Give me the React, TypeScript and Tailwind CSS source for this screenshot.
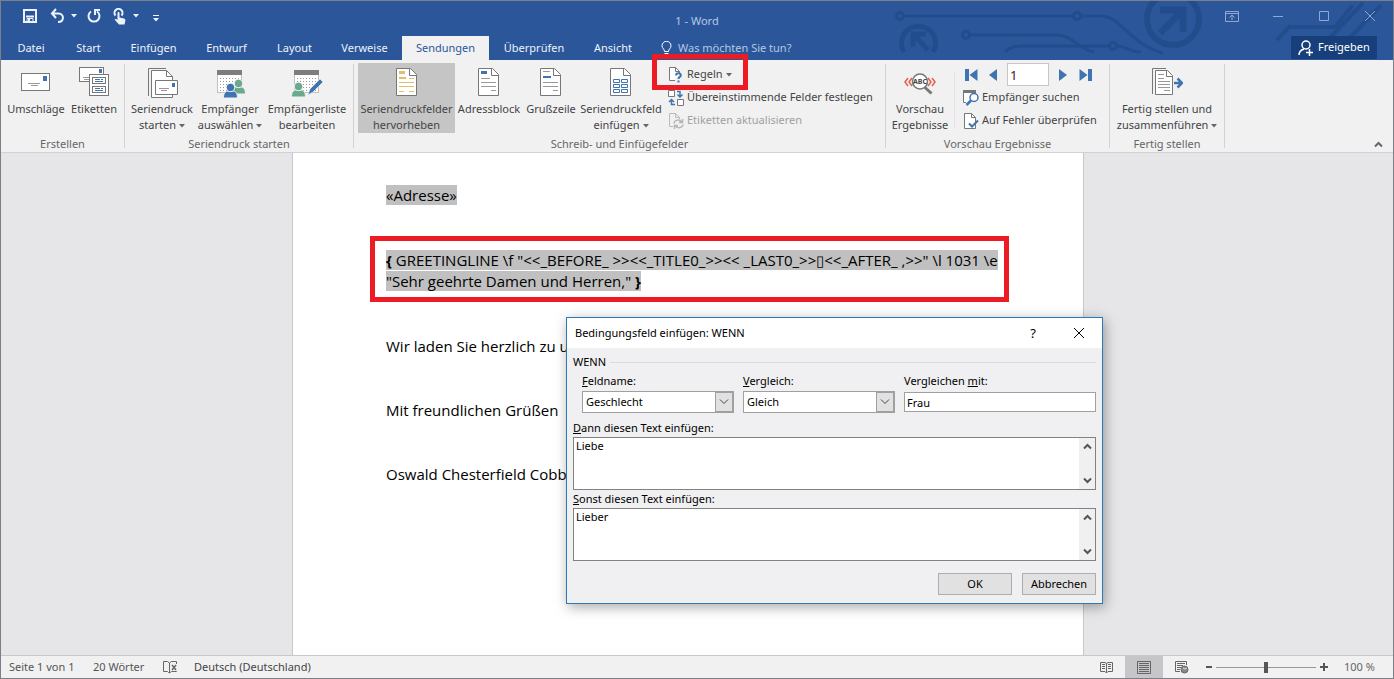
import type { ReactNode } from "react";
import clsx from "clsx";

const tabs = [
  { label: "Datei", width: "w-[60px]" },
  { label: "Start", width: "w-[55px]" },
  { label: "Einfügen", width: "w-[75px]" },
  { label: "Entwurf", width: "w-[71px]" },
  { label: "Layout", width: "w-[65px]" },
  { label: "Verweise", width: "w-[75px]" },
  { label: "Sendungen", width: "w-[87px]", active: true },
  { label: "Überprüfen", width: "w-[90px]" },
  { label: "Ansicht", width: "w-[68px]" },
];

/* ---------- Icons ---------- */

function Icon({ size = 32, children }: { size?: number; children: ReactNode }) {
  return (
    <svg width={size} height={size} viewBox={`0 0 ${size} ${size}`} fill="none" className="shrink-0">
      {children}
    </svg>
  );
}

function EnvelopeIcon() {
  return (
    <Icon>
      <rect x="1.5" y="6.5" width="28" height="17" fill="#fff" stroke="#777" />
      <rect x="23" y="9" width="4" height="5" fill="#3f74b1" />
      <path d="M8 16.5h12M11 18.5h7" stroke="#999" />
    </Icon>
  );
}

function LabelsIcon() {
  return (
    <Icon>
      <rect x="1.5" y=".5" width="24" height="14" fill="#fff" stroke="#777" />
      <rect x="21" y="2" width="3" height="4" fill="#3f74b1" />
      <path d="M5 10.5h6M6 12.5h5" stroke="#999" />
      <rect x="11.5" y="7.5" width="19" height="21" fill="#fff" stroke="#777" />
      <rect x="14.5" y="10.5" width="13" height="6" stroke="#777" />
      <rect x="14.5" y="19.5" width="13" height="6" stroke="#777" />
      <path d="M17 12.5h5M23 12.5h2M17 14.5h8M17 21.5h5M23 21.5h2M17 23.5h8" stroke="#3f74b1" />
    </Icon>
  );
}

function MergeStartIcon() {
  return (
    <Icon>
      <path d="M2.5 29V1.5H20" stroke="#777" />
      <path d="M5.5 30.5v-27h15l6 6v21z" fill="#fff" stroke="#777" />
      <path d="M20.5 3.5v6h6" stroke="#777" />
      <path d="M9.5 13.5h22v14h-22z" fill="#fff" stroke="#777" />
      <rect x="26" y="16" width="3" height="4" fill="#3f74b1" />
      <path d="M13 21.5h10M15 23.5h6" stroke="#999" />
    </Icon>
  );
}

function Calendar() {
  return (
    <>
      <rect x="3.5" y="4.5" width="24" height="21" fill="#fff" stroke="#888" strokeDasharray="1 1" />
      <rect x="3" y="3" width="25" height="5" fill="#7d7d7d" />
      <path
        d="M6 11.5h20M6 14.5h20M6 17.5h20M6 20.5h20M6 23.5h20"
        stroke="#999"
        strokeDasharray="1 2"
      />
    </>
  );
}

function Person({ x, y, fill }: { x: number; y: number; fill: string }) {
  return (
    <g transform={`translate(${x} ${y})`} fill={fill} stroke="#f1f1f2">
      <path d="M-.5 15c0-5 2-7 4.500-7h5c2.500 0 4.500 2 4.500 7z" />
      <circle cx="6.500" cy="4.500" r="4.200" />
    </g>
  );
}

function RecipientsIcon() {
  return (
    <Icon>
      <Calendar />
      <Person x={18} y={12} fill="#6aa98e" />
      <Person x={10} y={16} fill="#3f74b1" />
    </Icon>
  );
}

function EditListIcon() {
  return (
    <Icon>
      <Calendar />
      <Person x={1} y={15} fill="#6aa98e" />
      <path d="M17 28l2-6 10-10 3 3-10 10z" fill="#3f74b1" stroke="#f1f1f2" strokeWidth=".6" />
    </Icon>
  );
}

function Sheet({ children }: { children: ReactNode }) {
  return (
    <Icon>
      <path d="M5.5 1.5h14l6 6v21h-20z" fill="#fff" stroke="#777" />
      <path d="M18.500 1.500v7h7" stroke="#777" />
      {children}
    </Icon>
  );
}

function HighlightIcon() {
  return (
    <Sheet>
      <path d="M8 5.5h6" stroke="#e2bf6a" strokeWidth="3" />
      <path d="M8 11h7" stroke="#e2bf6a" strokeWidth="2" />
      <path d="M18 11.5h5M8 15.5h15M8 19.5h15M8 24.5h5M18 24.5h5" stroke="#e2bf6a" />
    </Sheet>
  );
}

function AddressIcon() {
  return (
    <Sheet>
      <path d="M8 5.5h6" stroke="#3f74b1" strokeWidth="3" />
      <path d="M8 11.5h9M8 15.5h15M8 19.5h15M18 23.5h5" stroke="#999" />
    </Sheet>
  );
}

function GreetingIcon() {
  return (
    <Sheet>
      <path d="M8 4.5h7M8 15.5h15M8 19.5h15M18 23.5h5" stroke="#999" />
      <path d="M8 10h8" stroke="#3f74b1" strokeWidth="2" />
    </Sheet>
  );
}

function MergeFieldIcon() {
  return (
    <Sheet>
      <path
        d="M8.5 12.5h6v3h-6zM16.5 12.5h6v3h-6zM8.5 17.5h6v3h-6zM16.5 17.5h6v3h-6zM8.5 22.5h6v3h-6zM16.5 22.5h6v3h-6z"
        stroke="#3f74b1"
      />
    </Sheet>
  );
}

function PreviewIcon() {
  return (
    <Icon>
      <path
        d="M4 11l-3 4 3 4M8 11l-3 4 3 4M24 11l3 4-3 4M28 11l3 4-3 4"
        stroke="#e0604c"
        strokeWidth="1.5"
      />
      <circle cx="16" cy="14.5" r="7.5" fill="#fff" stroke="#777" strokeWidth="1.5" />
      <path d="M20.5 20l7 6.500" stroke="#777" strokeWidth="3" />
      <text x="16" y="17" textAnchor="middle" fontSize="7" fontWeight="700" fill="#444">
        ABC
      </text>
    </Icon>
  );
}

function FinishIcon() {
  return (
    <Icon>
      <path d="M1.5 27V1.5H15" stroke="#777" />
      <path d="M4.5 3.5h12l5 5v19h-17z" fill="#fff" stroke="#777" />
      <path d="M15.5 3.5v6h6" stroke="#777" />
      <path d="M7 7.5h6M7 11.5h6M7 14.5h12M7 17.5h12M7 20.5h12M13 23.5h6" stroke="#999" />
      <path d="M23 16h8M26.5 11.5L31 16l-4.500 4.500" stroke="#3f74b1" strokeWidth="2.5" />
    </Icon>
  );
}

function RulesIcon() {
  return (
    <Icon size={16}>
      <path d="M7 13.5H1.5V.5h6l4 4V6" fill="#fff" stroke="#777" />
      <path d="M7.5.5v4h4" stroke="#777" />
      <path d="M8 8.500c.2-3.200 5-3 4.800 0 0 1.600-2.300 1.300-2.300 3.500" stroke="#3f74b1" strokeWidth="2" />
      <path d="M9.500 13.500h2v2h-2z" fill="#3f74b1" />
    </Icon>
  );
}

function MatchFieldsIcon() {
  return (
    <Icon size={16}>
      <path d="M.5.5h6v6h-6zM9.500 9.500h6v6h-6z" fill="#fff" stroke="#777" />
      <path
        d="M9 1.500h3V7M9.500 4.500L12 7l2.500-2.500M7 14.500H3.500V10M1 12l2.500-2.500L6 12"
        stroke="#3f74b1"
        strokeWidth="1.5"
      />
    </Icon>
  );
}

function UpdateLabelsIcon() {
  return (
    <Icon size={16}>
      <path d="M5 13.5H1.5V.5h6l4 4V6M7.5.5v4h4" stroke="#bbb" />
      <path
        d="M6 10.500c.5-4 6-4.500 7.500-1.500M14.500 6v3.500H11M15 11.500c-.5 3.500-6 4.500-7.500 1M6.500 16v-3.500H10"
        stroke="#b5b5b5"
        strokeWidth="1.5"
      />
    </Icon>
  );
}

function FindRecipientIcon() {
  return (
    <Icon size={16}>
      <path d="M3 12.500H.5V1.500h12V4" fill="#fff" stroke="#777" />
      <path d="M0 1.500h13" stroke="#777" strokeWidth="3" />
      <circle cx="11" cy="7.5" r="4" fill="#fff" stroke="#3f74b1" strokeWidth="1.5" />
      <path d="M8 10.500L3.500 15" stroke="#3f74b1" strokeWidth="2.5" />
    </Icon>
  );
}

function CheckErrorsIcon() {
  return (
    <Icon size={16}>
      <path d="M12.5 15.500h-11V.5h7l4 4z" fill="#fff" stroke="#777" />
      <path d="M8.500.5v4h4" stroke="#777" />
      <path d="M6 10.500l3 3 6-6" stroke="#3f74b1" strokeWidth="2" />
    </Icon>
  );
}

function Caret({ className = "text-[#666]" }: { className?: string }) {
  return (
    <svg width="6" height="4" viewBox="0 0 6 4" className={clsx("inline-block align-middle", className)}>
      <path d="M0 0h6L3 3.500z" fill="currentColor" />
    </svg>
  );
}

function Chevron({ up = false }: { up?: boolean }) {
  return (
    <svg width="9" height="7" viewBox="0 0 9 7" fill="none">
      <path d={up ? "M1 5.500L4.500 2 8 5.500" : "M1 1.500L4.500 5 8 1.500"} stroke="currentColor" strokeWidth="2" />
    </svg>
  );
}

/* ---------- Title bar ---------- */

function Circuit() {
  return (
    <svg
      width="500"
      height="60"
      viewBox="0 0 500 60"
      fill="none"
      stroke="#224d8d"
      className="pointer-events-none absolute top-0 right-0"
    >
      <g strokeWidth="3">
        <circle cx="7" cy="15" r="3.500" />
        <path d="M11 15h169M188 15h20c20 0 28 28 62 37" />
        <circle cx="184" cy="15" r="3.500" />
        <circle cx="73" cy="34" r="3.500" />
        <path d="M77 34h88c14 0 20 14 36 17M112 51c5-4 8-6 16-6h88M224 45c10 0 12 6 24 6" />
        <circle cx="220" cy="45" r="3.500" />
        <path d="M384 39l12-13h46l18-22M430 44l40-42M450 44l38-40" strokeWidth="4" />
      </g>
      <path d="M11 51a17 17 0 1 1 29 0" strokeWidth="5" />
      <path d="M20 46V33h13M21 34l14 15" strokeWidth="5" />
      <circle cx="280" cy="18" r="26" strokeWidth="6" />
      <path d="M267 9h23v22M289 10l-22 22" strokeWidth="7" />
    </svg>
  );
}

function QuickAccess() {
  return (
    <div className="flex items-center pl-[21px] text-[#eef3fb]">
      <button aria-label="Speichern">
        <svg width="16" height="16" viewBox="0 0 16 16" fill="none" stroke="currentColor">
          <path d="M2 2h12v12H2z" strokeWidth="2" />
          <path d="M4 8.500h8" strokeWidth="2" />
          <path d="M5 14v-3.500h6V14" />
          <path d="M6 11h2v3H6z" fill="currentColor" stroke="none" />
        </svg>
      </button>
      <button aria-label="Rückgängig" className="ml-3 flex items-center gap-1.5">
        <svg width="15" height="16" viewBox="0 0 15 16" fill="none" stroke="currentColor" strokeWidth="2">
          <path d="M6 1L2 5.500 6 10M2 5.500h6.500c6 0 6 8.500-.5 8.500" />
        </svg>
        <Caret className="text-[#eef3fb]" />
      </button>
      <button aria-label="Wiederholen" className="ml-2.5">
        <svg width="14" height="16" viewBox="0 0 14 16" fill="none" stroke="currentColor" strokeWidth="2">
          <path d="M4 3.500a5.500 5.500 0 1 0 6 0" />
          <path d="M8 7V2h5" />
        </svg>
      </button>
      <button aria-label="Touchmodus" className="ml-3 flex items-center gap-[7px]">
        <svg width="13" height="17" viewBox="0 0 13 17" fill="none" stroke="currentColor">
          <path d="M2.500 7.500a4 4 0 1 1 6 0" strokeWidth="2" />
          <path
            d="M4.500 5c0-1.500 2-1.500 2 0v4.500l4.500 1c1.500.4 1.500 1.500 1.200 3l-.7 3H6l-4.500-5c1-1 2-.5 3 .5z"
            fill="currentColor"
            stroke="none"
          />
        </svg>
        <Caret className="text-[#eef3fb]" />
      </button>
      <button aria-label="Symbolleiste anpassen" className="ml-3.5 pt-1">
        <svg width="6" height="7" viewBox="0 0 6 7" fill="currentColor">
          <path d="M0 0h6v1H0zM0 3h6L3 6.500z" />
        </svg>
      </button>
    </div>
  );
}

function WindowControls() {
  return (
    <div className="flex justify-end text-[#8fa9d2]">
      <button aria-label="Menüband-Anzeigeoptionen" className="grid w-[46px] place-items-center">
        <svg width="14" height="11" viewBox="0 0 14 11" fill="none" stroke="currentColor">
          <path d="M.5.5h13v10H.5zM.5 2.500h13M7 9V4M4.500 6.500L7 4l2.500 2.500" />
        </svg>
      </button>
      <button aria-label="Minimieren" className="grid w-[46px] place-items-center">
        <svg width="10" height="10" viewBox="0 0 10 10" stroke="currentColor">
          <path d="M0 5.500h10" />
        </svg>
      </button>
      <button aria-label="Maximieren" className="grid w-[46px] place-items-center">
        <svg width="10" height="10" viewBox="0 0 10 10" fill="none" stroke="currentColor">
          <path d="M.5.5h9v9h-9z" />
        </svg>
      </button>
      <button aria-label="Schließen" className="grid w-[46px] place-items-center">
        <svg width="12" height="12" viewBox="0 0 12 12" stroke="currentColor">
          <path d="M1 1l10 10M11 1L1 11" />
        </svg>
      </button>
    </div>
  );
}

function Header() {
  return (
    <header className="relative bg-[#2b579a] text-white">
      <Circuit />
      <div className="relative grid h-[30px] grid-cols-[1fr_auto_1fr]">
        <QuickAccess />
        <span className="self-end pb-0.5 text-[#b5c7e3]">1 - Word</span>
        <WindowControls />
      </div>
      <div className="relative flex pt-[5px]">
        <nav className="flex">
          {tabs.map((tab) => (
            <button
              key={tab.label}
              className={clsx(
                "h-6 whitespace-nowrap text-center",
                tab.width,
                tab.active ? "bg-[#f1f1f2] text-[#2b579a]" : "text-[#eef3fb]",
              )}
            >
              {tab.label}
            </button>
          ))}
        </nav>
        <button className="ml-3.5 flex items-center gap-1.5 text-[#b5c7e3]">
          <svg width="11" height="15" viewBox="0 0 11 15" fill="none" stroke="#fff">
            <path d="M3.500 10.500C3.500 8 1 7.500 1 4.800a4.500 4.500 0 0 1 9 0c0 2.700-2.500 3.200-2.500 5.700zM3.500 12.500h4M4 14.500h3" />
          </svg>
          Was möchten Sie tun?
        </button>
        <button className="mr-4 ml-auto flex h-[23px] w-[86px] items-center gap-1 bg-[#173f7c] pl-[7px]">
          <svg
            width="16"
            height="16"
            viewBox="0 0 16 16"
            fill="none"
            stroke="currentColor"
            strokeWidth="1.5"
            className="shrink-0"
          >
            <circle cx="8" cy="5" r="4" />
            <path d="M1 15c0-3.500 2-5 5-6M11.500 9v7M8 12.500h7" />
          </svg>
          Freigeben
        </button>
      </div>
    </header>
  );
}

/* ---------- Ribbon ---------- */

function RibbonGroup({ label, width, children }: { label: string; width: string; children: ReactNode }) {
  return (
    <section className={clsx("flex shrink-0 flex-col", width)}>
      <div className="flex h-[76px] pt-[3px]">{children}</div>
      <h2 className="text-center leading-4 text-[#666]">{label}</h2>
    </section>
  );
}

function Separator() {
  return <div className="my-1 w-px shrink-0 bg-[#d2d2d4]" />;
}

type BigButtonProps = {
  icon: ReactNode;
  lines: string[];
  width: string;
  menu?: boolean;
  pressed?: boolean;
};

function BigButton({ icon, lines, width, menu, pressed }: BigButtonProps) {
  return (
    <button
      className={clsx(
        "flex h-[70px] shrink-0 flex-col items-center pt-1 leading-4 whitespace-nowrap",
        width,
        pressed && "bg-[#c5c5c5]",
      )}
    >
      {icon}
      <span className="mt-0.5">{lines[0]}</span>
      {lines[1] && (
        <span>
          {lines[1]} {menu && <Caret />}
        </span>
      )}
    </button>
  );
}

function SmallButton({ icon, children, disabled }: { icon: ReactNode; children: ReactNode; disabled?: boolean }) {
  return (
    <button
      disabled={disabled}
      className={clsx("relative flex h-[23px] items-center gap-[3px] whitespace-nowrap", disabled && "text-[#a0a0a0]")}
    >
      {icon}
      {children}
    </button>
  );
}

function RecordNav() {
  return (
    <div className="flex h-[23px] items-center pl-0.5 text-[#3f74b1]">
      <button aria-label="Erster Datensatz">
        <svg width="13" height="12" viewBox="0 0 13 12" fill="currentColor">
          <path d="M0 0h4v12H0zM12.500 0v12L4.500 6z" />
        </svg>
      </button>
      <button aria-label="Vorheriger Datensatz" className="ml-[11px]">
        <svg width="8" height="12" viewBox="0 0 8 12" fill="currentColor">
          <path d="M8 0v12L0 6z" />
        </svg>
      </button>
      <input
        aria-label="Datensatz"
        defaultValue="1"
        className="mx-2.5 h-[23px] w-[42px] border border-[#c6c6c6] bg-white px-0.5 text-[13px] text-[#402020]"
      />
      <button aria-label="Nächster Datensatz">
        <svg width="8" height="12" viewBox="0 0 8 12" fill="currentColor">
          <path d="M0 0v12l8-6z" />
        </svg>
      </button>
      <button aria-label="Letzter Datensatz" className="ml-3">
        <svg width="13" height="12" viewBox="0 0 13 12" fill="currentColor">
          <path d="M.5 0v12l8-6zM9 0h4v12H9z" />
        </svg>
      </button>
    </div>
  );
}

function Ribbon() {
  return (
    <div className="flex h-[93px] border-b border-[#d2d2d4] bg-[#f1f1f2]">
      <RibbonGroup label="Erstellen" width="w-[123px]">
        <BigButton icon={<EnvelopeIcon />} lines={["Umschläge"]} width="w-[70px]" />
        <BigButton icon={<LabelsIcon />} lines={["Etiketten"]} width="w-[46px]" />
      </RibbonGroup>
      <Separator />
      <RibbonGroup label="Seriendruck starten" width="w-[228px]">
        <BigButton icon={<MergeStartIcon />} lines={["Seriendruck", "starten"]} width="w-[74px]" menu />
        <BigButton icon={<RecipientsIcon />} lines={["Empfänger", "auswählen"]} width="w-[62px]" menu />
        <BigButton icon={<EditListIcon />} lines={["Empfängerliste", "bearbeiten"]} width="w-[92px]" />
      </RibbonGroup>
      <Separator />
      <RibbonGroup label="Schreib- und Einfügefelder" width="w-[531px]">
        <div className="w-1 shrink-0" />
        <BigButton icon={<HighlightIcon />} lines={["Seriendruckfelder", "hervorheben"]} width="w-[97px]" pressed />
        <BigButton icon={<AddressIcon />} lines={["Adressblock"]} width="w-[68px]" />
        <BigButton icon={<GreetingIcon />} lines={["Grußzeile"]} width="w-[56px]" />
        <BigButton icon={<MergeFieldIcon />} lines={["Seriendruckfeld", "einfügen"]} width="w-[84px]" menu />
        <div className="ml-[5px]">
          <SmallButton icon={<RulesIcon />}>
            Regeln <Caret />
            <span className="pointer-events-none absolute -top-[9px] -left-4 h-9 w-24 border-5 border-[#ed1c24]" />
          </SmallButton>
          <SmallButton icon={<MatchFieldsIcon />}>Übereinstimmende Felder festlegen</SmallButton>
          <SmallButton icon={<UpdateLabelsIcon />} disabled>
            Etiketten aktualisieren
          </SmallButton>
        </div>
      </RibbonGroup>
      <Separator />
      <RibbonGroup label="Vorschau Ergebnisse" width="w-[223px]">
        <BigButton icon={<PreviewIcon />} lines={["Vorschau", "Ergebnisse"]} width="w-[68px]" />
        <div className="my-2 w-px bg-[#e2e2e4]" />
        <div className="ml-2">
          <RecordNav />
          <SmallButton icon={<FindRecipientIcon />}>Empfänger suchen</SmallButton>
          <SmallButton icon={<CheckErrorsIcon />}>Auf Fehler überprüfen</SmallButton>
        </div>
      </RibbonGroup>
      <Separator />
      <RibbonGroup label="Fertig stellen" width="w-[114px]">
        <BigButton icon={<FinishIcon />} lines={["Fertig stellen und", "zusammenführen"]} width="w-[114px]" menu />
      </RibbonGroup>
      <Separator />
      <button aria-label="Menüband reduzieren" className="mr-2.5 mb-1 ml-auto self-end text-[#666]">
        <Chevron up />
      </button>
    </div>
  );
}

/* ---------- Document ---------- */

function DocumentPage() {
  return (
    <article className="relative mx-auto w-[792px] border-x border-[#c8c8ca] bg-white px-[93px] pt-8 font-['Open_Sans','Noto_Sans',sans-serif] text-[15px] leading-[21px] text-black">
      <div className="flex flex-col gap-[43px]">
        <p>
          <span className="bg-[#c0c0c0]">«Adresse»</span>
        </p>
        <div className="relative my-px whitespace-nowrap">
          <p>
            <span className="bg-[#bfc0bf]">
              <b>{"{"}</b>
              {' GREETINGLINE \\f "<<_BEFORE_ >><<_TITLE0_>><< _LAST0_>>▯<<_AFTER_ ,>>" \\l 1031 \\e'}
            </span>
          </p>
          <p>
            <span className="bg-[#bfc0bf]">
              {'"Sehr geehrte Damen und Herren," '}
              <b>{"}"}</b>
            </span>
          </p>
          <span className="pointer-events-none absolute -top-[14px] -right-[19px] -bottom-[10px] -left-4 border-5 border-[#ed1c24]" />
        </div>
        <p>Wir laden Sie herzlich zu u</p>
        <p>Mit freundlichen Grüßen</p>
        <p>Oswald Chesterfield Cobblepot</p>
      </div>
      <FieldDialog />
    </article>
  );
}

function SelectField({ id, label, value }: { id: string; label: ReactNode; value: string }) {
  return (
    <div className="w-[152px]">
      <label htmlFor={id} className="block h-[18px]">
        {label}
      </label>
      <div className="relative flex h-[22px] border border-[#a0a0a0] bg-white">
        <select id={id} defaultValue={value} className="w-full appearance-none pl-[3px]">
          <option>{value}</option>
        </select>
        <span className="pointer-events-none absolute inset-y-0 right-0 grid w-[18px] place-items-center border border-[#a0a0a0] bg-[#e1e1e1] text-[#444]">
          <svg width="10" height="6" viewBox="0 0 10 6" fill="none" stroke="currentColor">
            <path d="M1 .5l4 4 4-4" />
          </svg>
        </span>
      </div>
    </div>
  );
}

function TextField({ id, label, value }: { id: string; label: ReactNode; value: string }) {
  return (
    <div>
      <label htmlFor={id} className="block h-[18px] leading-[18px]">
        {label}
      </label>
      <div className="flex h-[53px] border border-[#828282] bg-white">
        <textarea id={id} defaultValue={value} className="flex-1 resize-none overflow-hidden pl-0.5" />
        <div className="flex w-4 flex-col items-center justify-between bg-[#f0f0f0] py-[5px] text-[#555]">
          <Chevron up />
          <Chevron />
        </div>
      </div>
    </div>
  );
}

function FieldDialog() {
  return (
    <div
      role="dialog"
      aria-label="Bedingungsfeld einfügen: WENN"
      className="absolute top-[164px] left-[273px] w-[537px] border border-[#2a7ab8] bg-[#f0eff1] pb-2 font-['Noto_Sans',sans-serif] text-[11px] leading-4 text-black shadow-[2px_3px_12px_rgba(0,0,0,0.35)]"
    >
      <div className="flex h-[30px] items-center bg-white pl-2">
        Bedingungsfeld einfügen: WENN
        <button aria-label="Hilfe" className="ml-auto w-[46px] text-[13px]">
          ?
        </button>
        <button aria-label="Schließen" className="grid w-[46px] place-items-center">
          <svg width="12" height="12" viewBox="0 0 12 12" stroke="currentColor">
            <path d="M1 1l10 10M11 1L1 11" />
          </svg>
        </button>
      </div>
      <form className="px-[6px] pt-[6px]">
        <div className="flex items-center gap-1">
          WENN
          <span className="h-px flex-1 bg-[#dadadc]" />
        </div>
        <div className="mt-[3px] mb-[6px] flex gap-[9px] pl-[9px]">
          <SelectField
            id="feldname"
            label={
              <>
                <u>F</u>eldname:
              </>
            }
            value="Geschlecht"
          />
          <SelectField
            id="vergleich"
            label={
              <>
                <u>V</u>ergleich:
              </>
            }
            value="Gleich"
          />
          <div className="flex-1">
            <label htmlFor="wert" className="block h-[18px]">
              Vergleichen <u>m</u>it:
            </label>
            <input id="wert" defaultValue="Frau" className="mt-px h-5 w-full border border-[#a0a0a0] bg-white pl-0.5" />
          </div>
        </div>
        <TextField
          id="dann"
          label={
            <>
              <u>D</u>ann diesen Text einfügen:
            </>
          }
          value="Liebe"
        />
        <TextField
          id="sonst"
          label={
            <>
              <u>S</u>onst diesen Text einfügen:
            </>
          }
          value="Lieber"
        />
        <div className="mt-3 flex justify-end gap-2.5">
          <button type="button" className="h-[22px] w-[74px] border border-[#adadad] bg-[#e1e1e1]">
            OK
          </button>
          <button type="button" className="h-[22px] w-[74px] border border-[#adadad] bg-[#e1e1e1]">
            Abbrechen
          </button>
        </div>
      </form>
    </div>
  );
}

/* ---------- Status bar ---------- */

function StatusBar() {
  return (
    <footer className="flex h-[23px] items-center border-t border-[#c9c9cb] bg-[#f1f1f2] pl-2 whitespace-nowrap text-[#555]">
      <span className="w-[84px]">Seite 1 von 1</span>
      <span className="w-[70px]">20 Wörter</span>
      <svg width="15" height="13" viewBox="0 0 15 13" fill="none" stroke="#666">
        <path d="M7 11.500H5.500l-1-1H.5V.5h4L6.500 2v10M6.500 2l2-1.500h5V3M6.500 12l2-1.500h5V10" />
        <path d="M9 4l4 5M13 4L9 9" strokeWidth="1.5" />
      </svg>
      <span className="ml-4 text-[#444]">Deutsch (Deutschland)</span>
      <div className="ml-auto flex h-full items-center text-[#666]">
        <button aria-label="Lesemodus" className="grid h-full w-[38px] place-items-center">
          <svg width="13" height="13" viewBox="0 0 13 13" fill="none" stroke="currentColor">
            <path d="M.5 1.500H5l1.500 1L8 1.500h4.500v9H8L6.500 12 5 10.500H.5zM6.500 2v10M2 3.500h3M2 5.500h3M2 7.500h3M8 3.500h3M8 5.500h3M8 7.500h3" />
          </svg>
        </button>
        <button aria-label="Seitenlayout" className="grid h-full w-[38px] place-items-center bg-[#c6c6c8]">
          <svg width="14" height="13" viewBox="0 0 14 13" fill="none" stroke="currentColor">
            <path d="M.5.5h13v12H.5zM2 2.500h10M2 4.500h10M2 6.500h10M2 8.500h10M2 10.500h10" />
          </svg>
        </button>
        <button aria-label="Weblayout" className="grid h-full w-[38px] place-items-center">
          <svg width="14" height="13" viewBox="0 0 14 13" fill="none" stroke="currentColor">
            <path d="M5 10.500H.5V.5h11V4M2 2.500h8M2 4.500h6M2 6.500h4M2 8.500h3" />
            <circle cx="9.500" cy="8.500" r="3.500" fill="#888" />
            <path d="M8 7l2 1 2-1" stroke="#ddd" />
          </svg>
        </button>
        <button aria-label="Verkleinern" className="ml-[5px] h-0.5 w-1.5 bg-[#555]" />
        <input
          type="range"
          aria-label="Zoom"
          defaultValue={50}
          className="mx-1 h-[11px] w-[100px] appearance-none bg-[linear-gradient(#999,#999)] bg-size-[100%_1px] bg-center bg-no-repeat [&::-webkit-slider-thumb]:h-[11px] [&::-webkit-slider-thumb]:w-1 [&::-webkit-slider-thumb]:appearance-none [&::-webkit-slider-thumb]:bg-[#555]"
        />
        <button aria-label="Vergrößern">
          <svg width="8" height="8" viewBox="0 0 8 8" stroke="#555" strokeWidth="2">
            <path d="M0 4h8M4 0v8" />
          </svg>
        </button>
        <span className="w-[65px] pl-4">100 %</span>
      </div>
    </footer>
  );
}

export default function App() {
  return (
    <div className="flex min-h-screen flex-col border border-[#7c7f86] bg-[#e6e5e8] font-['Noto_Sans',sans-serif] text-[11px] text-[#444]">
      <Header />
      <Ribbon />
      <main className="flex flex-1 overflow-hidden pr-[18px]">
        <DocumentPage />
      </main>
      <StatusBar />
    </div>
  );
}
